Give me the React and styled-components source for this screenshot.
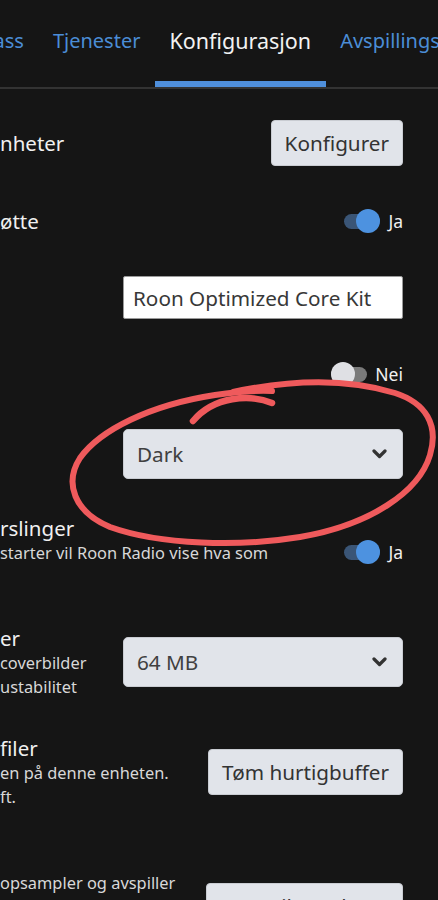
import React from 'react';
import styled, { createGlobalStyle } from 'styled-components';

const GlobalStyle = createGlobalStyle`
  html, body {
    margin: 0;
    padding: 0;
    background: #151515;
  }
  body {
    font-family: "Noto Sans", "Open Sans", sans-serif;
  }
`;

const Page = styled.div`
  position: relative;
  width: 438px;
  height: 900px;
  overflow: hidden;
  background: #151515;
`;

// fanene øverst
const TabBar = styled.nav`
  display: flex;
  height: 89px;
  margin-left: -21px;
  border-bottom: 2px solid #333;
  box-sizing: border-box;
  white-space: nowrap;
`;

const Tab = styled.div`
  display: flex;
  align-items: center;
  padding: 0 14.5px;
  box-sizing: border-box;
  border-bottom: 6px solid ${(p) => (p.$active ? '#4f8fdb' : 'transparent')};
  font-size: ${(p) => (p.$active ? '21.5px' : '20px')};
  color: ${(p) => (p.$active ? '#f2f2f2' : '#4b8dd6')};
  flex-shrink: 0;
`;

const Settings = styled.div`
  display: flex;
  flex-direction: column;
  gap: 36px;
  padding: 31px 35px 0 0;
`;

const Row = styled.div`
  display: flex;
  align-items: center;
  justify-content: space-between;
  min-height: 38px;
  gap: 16px;
`;

const Label = styled.div`
  flex: 1;
  min-width: 0;
  overflow: hidden;
  white-space: nowrap;
`;

const Title = styled.div`
  font-size: 20.5px;
  line-height: 26px;
  min-height: 26px;
  color: #f0f0f0;
`;

const Desc = styled.div`
  font-size: 16.4px;
  line-height: 24px;
  min-height: 24px;
  color: #d8d8d8;
`;

const Button = styled.button`
  flex-shrink: 0;
  height: 46px;
  padding: 0 13px;
  border: 1px solid #c9ccd2;
  border-radius: 4px;
  background: #e1e4ea;
  color: #333;
  font-family: inherit;
  font-size: 20.7px;
`;

const TextInput = styled.input`
  flex-shrink: 0;
  width: 280px;
  height: 43px;
  box-sizing: border-box;
  padding: 0 9px;
  border: 1px solid #9a9a9a;
  border-radius: 2px;
  background: #fff;
  color: #383838;
  font-family: inherit;
  font-size: 20.7px;
  outline: none;
`;

const Select = styled.div`
  flex-shrink: 0;
  display: flex;
  align-items: center;
  justify-content: space-between;
  width: 280px;
  height: 50px;
  box-sizing: border-box;
  padding: 0 15px 0 13px;
  border: 1px solid #c9ccd2;
  border-radius: 5px;
  background: #e1e4ea;
  color: #404040;
  font-size: 20.7px;
`;

const SwitchWrap = styled.div`
  flex-shrink: 0;
  display: flex;
  align-items: center;
  gap: 8px;
  font-size: 17.5px;
  color: #f0f0f0;
`;

const Track = styled.div`
  display: flex;
  align-items: center;
  justify-content: ${(p) => (p.$on ? 'flex-end' : 'flex-start')};
  width: 36px;
  height: 15px;
  border-radius: 8px;
  background: ${(p) => (p.$on ? '#3a5576' : '#7a7a7a')};
`;

const Knob = styled.div`
  width: 24px;
  height: 24px;
  border-radius: 50%;
  background: ${(p) => (p.$on ? '#4d92e0' : '#dfe0e4')};
`;

const Scribble = styled.svg`
  position: absolute;
  left: 0;
  top: 0;
  pointer-events: none;
`;

function Switch({ on }) {
  return (
    <SwitchWrap>
      <Track $on={on}>
        <Knob $on={on} />
      </Track>
      {on ? 'Ja' : 'Nei'}
    </SwitchWrap>
  );
}

function Chevron() {
  return (
    <svg width="15" height="10" viewBox="0 0 15 10">
      <polyline points="2,2 7.5,7.5 13,2" fill="none" stroke="#333" strokeWidth="3.2" strokeLinecap="round" strokeLinejoin="round" />
    </svg>
  );
}

const rows = [
  { title: 'nheter', control: <Button>Konfigurer</Button> },
  { title: 'øtte', control: <Switch on /> },
  { title: '', control: <TextInput defaultValue="Roon Optimized Core Kit" /> },
  { title: '', control: <Switch on={false} /> },
  { title: '', control: <Select>Dark<Chevron /></Select> },
  { title: 'rslinger', desc: ['starter vil Roon Radio vise hva som', ''], control: <Switch on /> },
  { title: 'er', desc: ['coverbilder', 'ustabilitet'], control: <Select>64 MB<Chevron /></Select> },
  { title: 'filer', desc: ['en på denne enheten.', 'ft.'], control: <Button>Tøm hurtigbuffer</Button> },
  { title: '', desc: ['opsampler og avspiller', '', '', ''], control: <Button>Legg til HQPlayer</Button> },
];

export default function App() {
  return (
    <Page>
      <GlobalStyle />
      <TabBar>
        <Tab>ass</Tab>
        <Tab>Tjenester</Tab>
        <Tab $active>Konfigurasjon</Tab>
        <Tab>Avspillingsk</Tab>
      </TabBar>
      <Settings>
        {rows.map((r, i) => (
          <Row key={i}>
            <Label>
              <Title>{r.title}</Title>
              {(r.desc || []).map((d, j) => (
                <Desc key={j}>{d}</Desc>
              ))}
            </Label>
            {r.control}
          </Row>
        ))}
      </Settings>
      <Scribble width="438" height="900" viewBox="0 0 438 900">
        <path
          d="M 233 392 C 280 382, 340 376, 395 393 C 426 403, 439 425, 430 455 C 419 492, 370 525, 300 537 C 240 547, 160 545, 110 527 C 74 512, 64 483, 80 458 C 100 430, 150 405, 215 395 C 235 392, 252 390, 272 391"
          fill="none"
          stroke="#ef5a5c"
          strokeWidth="6"
          strokeLinecap="round"
        />
        <path
          d="M 272 403 C 250 394, 214 396, 193 421"
          fill="none"
          stroke="#ef5a5c"
          strokeWidth="6.5"
          strokeLinecap="round"
        />
      </Scribble>
    </Page>
  );
}
